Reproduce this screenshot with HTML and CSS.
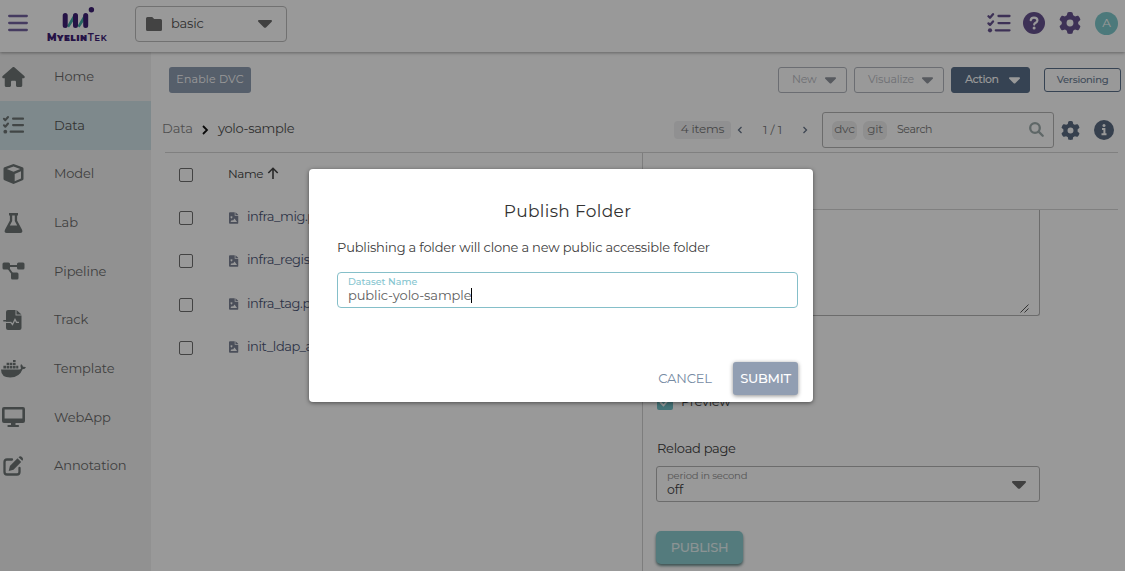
FILE: index.html
```html
<!DOCTYPE html>
<html lang="en">
<head>
<meta charset="utf-8">
<title>MyelinTek</title>
<link rel="stylesheet" href="styles.css">
</head>
<body>
<svg class="defs" width="0" height="0">
  <symbol id="gear" viewBox="0 0 512 512"><path d="M495.9 166.6c3.2 8.7 .5 18.4-6.4 24.6l-43.3 39.4c1.1 8.3 1.7 16.8 1.7 25.4s-.6 17.1-1.7 25.4l43.3 39.4c6.9 6.2 9.6 15.9 6.4 24.6c-4.4 11.9-9.7 23.3-15.8 34.3l-4.7 8.1c-6.6 11-14 21.4-22.1 31.2c-5.9 7.2-15.7 9.6-24.5 6.8l-55.7-17.7c-13.4 10.3-28.2 18.9-44 25.4l-12.5 57.1c-2 9.1-9 16.3-18.2 17.8c-13.8 2.3-28 3.5-42.5 3.5s-28.7-1.2-42.5-3.5c-9.2-1.5-16.2-8.7-18.2-17.8l-12.5-57.1c-15.8-6.5-30.6-15.1-44-25.4L83.1 425.9c-8.8 2.8-18.6 .3-24.5-6.8c-8.1-9.8-15.5-20.2-22.1-31.2l-4.7-8.1c-6.1-11-11.4-22.4-15.8-34.3c-3.2-8.7-.5-18.4 6.4-24.6l43.3-39.4C64.6 273.1 64 264.6 64 256s.6-17.1 1.7-25.4L22.4 191.2c-6.9-6.2-9.6-15.9-6.4-24.6c4.4-11.9 9.7-23.3 15.8-34.3l4.7-8.1c6.600-11 14-21.4 22.1-31.2c5.9-7.2 15.7-9.6 24.5-6.8l55.7 17.7c13.4-10.3 28.2-18.9 44-25.4l12.5-57.1c2-9.1 9-16.3 18.2-17.8C227.3 1.2 241.5 0 256 0s28.7 1.2 42.5 3.5c9.2 1.5 16.2 8.7 18.2 17.8l12.5 57.1c15.8 6.5 30.6 15.1 44 25.4l55.7-17.7c8.8-2.8 18.6-.3 24.5 6.8c8.1 9.8 15.5 20.2 22.1 31.2l4.7 8.1c6.1 11 11.4 22.4 15.8 34.3zM256 336a80 80 0 1 0 0-160 80 80 0 1 0 0 160z"/></symbol>
  <symbol id="tasks" viewBox="0 0 24 22"><g fill="none" stroke="currentColor" stroke-width="2.3" stroke-linecap="round" stroke-linejoin="round"><path d="M1.500 4.200l1.500 1.500L6 2.200M1.500 11.400l1.500 1.500 3-3.500M11.500 4h11M11.500 11.100h11M8.800 18.300h13.700"/></g><circle cx="3" cy="18.300" r="2.100"/></symbol>
  <symbol id="caret" viewBox="0 0 14 8"><path d="M1 0h12c1 0 1.300 1 .7 1.700L8 7.400c-.6.6-1.400.6-2 0L.3 1.700C-.3 1 0 0 1 0z"/></symbol>
  <symbol id="image" viewBox="0 0 10 12"><path fill-rule="evenodd" d="M1 0h5v3.500h4V11a1 1 0 0 1-1 1H1a1 1 0 0 1-1-1V1a1 1 0 0 1 1-1zM6.800 0L10 2.800H6.800zM2.600 4.200a1 1 0 1 0 .01 0zM1.500 10.300h7L5.800 6.500l-1.700 2.300-.9-1z"/></symbol>
</svg>

<div class="app">
  <header class="topbar">
    <svg class="burger" viewBox="0 0 20 18"><path d="M1.200 2h17.600M1.200 9h17.600M1.200 16h17.600"/></svg>
    <div class="logo">
      <svg class="mark" viewBox="0 0 34 24"><path class="teal" d="M5 20l7-12v6L7 21.500zM15.500 20l7-12v6l-5 7.500z"/><path class="bars" d="M3.200 9.500v10M13.500 9.500v10M23.700 9.500v10"/><circle cx="29.400" cy="3.700" r="2.700"/></svg>
      <div class="brand"><b>Myelin</b>Tek</div>
    </div>
    <div class="project">
      <svg class="folder" viewBox="0 0 16 14"><path d="M1.500 0h4.700l2 2H14.500A1.500 1.500 0 0 1 16 3.500v9A1.500 1.500 0 0 1 14.500 14h-13A1.500 1.500 0 0 1 0 12.500v-11A1.500 1.500 0 0 1 1.500 0z"/></svg>
      <span class="project-name">basic</span>
      <svg class="caret-lg"><use href="#caret"/></svg>
    </div>
    <div class="top-actions">
      <svg class="t-tasks"><use href="#tasks"/></svg>
      <svg class="t-help" viewBox="0 0 22 22"><circle cx="11" cy="11" r="11"/><path d="M7.700 8.200C8 6.500 9.300 5.700 11 5.700c2 0 3.400 1.100 3.400 2.700 0 2.300-3.200 2.300-3.200 4.200" fill="none" stroke="#fff" stroke-width="2.200" stroke-linecap="round"/><circle cx="11.100" cy="15.900" r="1.500" fill="#fff"/></svg>
      <svg class="t-gear"><use href="#gear"/></svg>
      <span class="avatar">A</span>
    </div>
  </header>

  <div class="body">
    <nav class="sidebar">
      <a class="item"><svg class="ico" viewBox="0 0 576 512"><path d="M575.800 255.500c0 18-15 32.100-32 32.100h-32l.7 160.200c0 2.700-.2 5.400-.5 8.100V472c0 22.100-17.900 40-40 40H392c-22.100 0-40-17.900-40-40V384c0-17.700-14.300-32-32-32H256c-17.700 0-32 14.300-32 32v88c0 22.100-17.900 40-40 40H104c-22.100 0-40-17.900-40-40V287.600H32c-18 0-32-14-32-32.100c0-9 3-17 10-24L266.400 8c7-7 15-8 22-8s15 2 21 7L564.800 231.500c8 7 12 15 11 24z"/></svg><span>Home</span></a>
      <a class="item active"><svg class="ico"><use href="#tasks"/></svg><span>Data</span></a>
      <a class="item"><svg class="ico" viewBox="0 0 22 20"><path fill-rule="evenodd" d="M11 0l9 3.200q1 .4 1 1.500v10q0 1-1 1.500L11 20l-9-3.800q-1-.5-1-1.500v-10q0-1.100 1-1.500zM11 2.500L4.300 5l6.700 2.700L17.700 5zM12.200 10v7.200l6.300-2.700V7.300z"/></svg><span>Model</span></a>
      <a class="item"><svg class="ico" viewBox="0 0 22 20"><path fill-rule="evenodd" d="M6.500 0h9v2.400h-.9v5.100l4.800 9q1.500 3.300-1.700 3.500H4.300Q1 19.800 2.600 16.500l4.800-9V2.400h-.9zM9.700 2.400v5.700L7.300 12.500h7.400l-2.400-4.400V2.400z"/></svg><span>Lab</span></a>
      <a class="item"><svg class="ico" viewBox="0 0 22 20"><rect x="0" y="1.500" width="7.500" height="7" rx="1.500"/><rect x="14.500" y="1.500" width="7.500" height="7" rx="1.500"/><rect x="8.500" y="11.500" width="7.500" height="7" rx="1.500"/><path d="M7 5h8M6 7.500l4 5.500" fill="none" stroke="currentColor" stroke-width="2"/></svg><span>Pipeline</span></a>
      <a class="item"><svg class="ico" viewBox="0 0 22 20"><path d="M5.500 0h7.500v5.500h6V18a2 2 0 0 1-2 2H5.500a2 2 0 0 1-2-2V2a2 2 0 0 1 2-2zM14 0l5 4.500h-5z"/><path class="cut" d="M3 12.300h5.300l1.700 2.200 2.500-5 1.500 2.800h2.500"/><path d="M.8 10h7v1.600h-7z"/></svg><span>Track</span></a>
      <a class="item"><svg class="ico docker" viewBox="0 0 25 18"><path d="M0 9.500h18.300q1.200-.2 1.700-1Q18.700 6.300 20 4q1.700 1 2 2.800 1.800-.3 3 .5-.8 2-3.500 2-3 8.200-12.300 8.200Q0 17.500 0 9.500z"/><path d="M2.400 5.700h2.600v2.800H2.400zM5.600 5.700h2.600v2.800H5.600zM8.800 5.700h2.600v2.800H8.800zM12 5.700h2.600v2.800H12zM15.200 5.700h2.100v2.800h-2.100zM5.600 2.700h2.600v2.400H5.600zM8.800 2.700h2.600v2.400H8.800zM12 2.700h2.600v2.400H12zM12 0h2.600v2.100H12z"/></svg><span>Template</span></a>
      <a class="item"><svg class="ico" viewBox="0 0 23 20"><path fill-rule="evenodd" d="M2 0h19a2 2 0 0 1 2 2v12a2 2 0 0 1-2 2H13.500v2H16q1.200 0 1.200 1T16 20H6.500q-1.200 0-1.200-1t1.200-1H9v-2H2a2 2 0 0 1-2-2V2a2 2 0 0 1 2-2zM2.600 2.600v8.800h17.800V2.600z"/></svg><span>WebApp</span></a>
      <a class="item"><svg class="ico" viewBox="0 0 22 20"><path d="M9.500 3.500H4.500Q2 3.500 2 6v10q0 2.500 2.500 2.500h10Q17 18.500 17 16v-4" fill="none" stroke="currentColor" stroke-width="2.300" stroke-linecap="round"/><path d="M15 2.300l3.700 3.700-7.700 7.700-4.800 1.300 1.200-5zM16 1.300q1.600-1.800 3.400-.4 2 1.900.4 3.900z"/></svg><span>Annotation</span></a>
    </nav>

    <main class="content">
      <div class="toolbar">
        <button class="btn dvc">Enable DVC</button>
        <div class="tools">
          <button class="btn ghost new"><span>New</span><svg class="caret-sm"><use href="#caret"/></svg></button>
          <button class="btn ghost visualize"><span>Visualize</span><svg class="caret-sm"><use href="#caret"/></svg></button>
          <button class="btn action"><span>Action</span><svg class="caret-sm"><use href="#caret"/></svg></button>
          <button class="btn versioning">Versioning</button>
        </div>
      </div>

      <div class="crumbs">
        <span class="crumb-root">Data</span>
        <svg class="sep" viewBox="0 0 8 10"><path d="M2 1l4 4-4 4"/></svg>
        <span class="crumb-leaf">yolo-sample</span>
        <div class="pager">
          <span class="count">4 items</span>
          <svg class="chev" viewBox="0 0 6 8"><path d="M4.500 1L1.500 4l3 3"/></svg>
          <span class="page">1 / 1</span>
          <svg class="chev" viewBox="0 0 6 8"><path d="M1.500 1l3 3-3 3"/></svg>
        </div>
        <div class="search">
          <span class="tag">dvc</span><span class="tag git">git</span><span class="hint">Search</span>
          <svg class="glass" viewBox="0 0 15 15"><circle cx="6" cy="6" r="4.800"/><path d="M9.600 9.600L13.700 13.700"/></svg>
        </div>
        <svg class="c-gear"><use href="#gear"/></svg>
        <svg class="c-info" viewBox="0 0 20 20"><circle cx="10" cy="10" r="10"/><circle cx="10" cy="5.600" r="1.500" fill="#fff"/><path d="M8 9h2.400v5M7.500 14.300h5" fill="none" stroke="#fff" stroke-width="2"/></svg>
      </div>

      <div class="panes">
        <section class="files">
          <div class="row head"><i class="box"></i><span class="col">Name</span><svg class="up" viewBox="0 0 12 12"><path d="M6 12V1.500M1.300 6L6 1.300 10.700 6"/></svg></div>
          <div class="row"><i class="box"></i><svg class="file"><use href="#image"/></svg><span>infra_mig.png</span></div>
          <div class="row"><i class="box"></i><svg class="file"><use href="#image"/></svg><span>infra_registry.png</span></div>
          <div class="row"><i class="box"></i><svg class="file"><use href="#image"/></svg><span>infra_tag.png</span></div>
          <div class="row"><i class="box"></i><svg class="file"><use href="#image"/></svg><span>init_ldap_auth.png</span></div>
        </section>
        <section class="detail">
          <div class="detail-head"></div>
          <div class="form">
            <div class="textarea"><svg class="grip" viewBox="0 0 9 9"><path d="M.5 8.500l8-8M4.500 8.500l4-4"/></svg></div>
            <div class="preview"><span class="checked"><svg viewBox="0 0 12 10"><path d="M1 5l3.500 3.500L11 1"/></svg></span><span>Preview</span></div>
            <div class="label">Reload page</div>
            <div class="select">
              <div><div class="select-label">period in second</div><div class="select-value">off</div></div>
              <svg class="caret-lg"><use href="#caret"/></svg>
            </div>
            <button class="publish">PUBLISH</button>
          </div>
        </section>
      </div>
    </main>
  </div>
</div>

<div class="overlay">
  <div class="dialog">
    <h1>Publish Folder</h1>
    <p>Publishing a folder will clone a new public accessible folder</p>
    <div class="field">
      <div class="field-label">Dataset Name</div>
      <div class="field-value"><span>public-yolo-sample</span><i class="cursor"></i></div>
    </div>
    <div class="buttons">
      <button class="cancel">CANCEL</button>
      <button class="submit">SUBMIT</button>
    </div>
  </div>
</div>
</body>
</html>
```

FILE: styles.css
```css
* { box-sizing: border-box; }
body {
  margin: 0;
  width: 1125px;
  height: 571px;
  overflow: hidden;
  font-family: Montserrat, Inter, sans-serif;
  font-size: 13px;
  line-height: 16px;
  color: #404040;
  background: #fff;
}
button { font: inherit; border: 0; padding: 0 0 2px; background: none; white-space: nowrap; }
svg { display: block; flex: none; fill: currentColor; }
.defs { position: absolute; }
.app { height: 571px; display: flex; flex-direction: column; }

.topbar {
  flex: none;
  height: 52px;
  display: flex;
  align-items: flex-start;
  background: #fff;
  box-shadow: 0 1px 3px rgba(0, 0, 0, .35);
  z-index: 1;
}
.burger { width: 20px; height: 18px; margin: 14px 0 0 8px; fill: none; stroke: #7463a0; stroke-width: 2.3; stroke-linecap: round; }
.logo { width: 62px; margin: 6px 0 0 18px; color: #3f2176; }
.mark { width: 34px; height: 24px; margin-left: 16px; }
.mark .teal { fill: #41aaa4; }
.mark .bars { stroke: currentColor; stroke-width: 5; stroke-linecap: round; }
.brand { font-size: 10px; line-height: 16px; font-variant: small-caps; font-weight: 600; letter-spacing: .5px; white-space: nowrap; margin-left: 1px; }
.brand b { font-weight: 900; }
.project {
  width: 152px;
  height: 36px;
  margin: 6px 0 0 27px;
  padding: 0 14px 0 10px;
  display: flex;
  align-items: center;
  border: 1px solid #bdbdbd;
  border-radius: 4px;
}
.folder { width: 16px; height: 14px; color: #707070; }
.project-name { margin: 0 0 2px 9px; flex: 1; letter-spacing: -.2px; color: #505050; }
.caret-lg { width: 14px; height: 8px; color: #6b6b6b; }
.top-actions { margin-left: auto; display: flex; align-items: center; height: 46px; color: #67528f; padding-right: 7px; }
.t-tasks { width: 24px; height: 22px; margin-right: 12px; }
.t-help { width: 22px; height: 22px; margin-right: 14px; }
.t-gear { width: 22px; height: 22px; margin-right: 14px; }
.avatar { width: 23px; height: 23px; border-radius: 50%; background: #7fcacd; color: #fff; font-size: 12px; line-height: 21px; text-align: center; }

.body { flex: 1; display: flex; min-height: 0; }
.sidebar { width: 151px; flex: none; background: #f2f2f2; }
.item { height: 48.65px; padding-left: 2px; display: flex; align-items: center; color: #6a6a6a; letter-spacing: -.1px; }
.item span { margin-bottom: 1px; }
.item:first-child { height: 49px; }
.item.active { background: #d3e5ea; color: #555; }
.ico { width: 23px; height: 20px; margin-right: 29px; color: #6e7676; }
.docker { width: 25px; height: 18px; margin-left: -1px; margin-right: 28px; }
.cut { fill: none; stroke: #f2f2f2; stroke-width: 1.300; }

.content { flex: 1; min-width: 0; padding: 15px 7px 0 11px; display: flex; flex-direction: column; }
.toolbar { display: flex; justify-content: space-between; height: 26px; padding-left: 7px; margin-right: -3px; }
.btn { height: 26px; border-radius: 3px; font-size: 11px; }
.dvc { width: 82px; background: #8f9eb2; color: #fff; letter-spacing: .2px; }
.tools { display: flex; align-items: flex-start; }
.tools .btn { display: flex; align-items: center; justify-content: space-between; padding: 0 10px 0 13px; border: 1px solid #b3b6bf; color: #b9bbc3; }
.tools .btn span { margin-bottom: 2px; letter-spacing: -.2px; }
.caret-sm { width: 11px; height: 7px; color: #91969f; margin-top: 1px; }
.tools .new { width: 69px; margin-right: 7px; }
.tools .visualize { width: 90px; margin-right: 7px; }
.tools .action { width: 79px; margin-right: 14px; padding-right: 9px; background: #5b708a; border-color: #5b708a; color: #fff; font-weight: 500; }
.tools .action span { letter-spacing: -.5px; }
.action .caret-sm { color: #fff; }
.tools .versioning { width: 77px; height: 24px; margin-top: 1px; padding: 0; justify-content: center; border-color: #5b708a; color: #6b7e95; font-size: 10px; font-weight: 500; letter-spacing: -.25px; }

.crumbs { height: 36px; margin: 19px -4px 0 0; display: flex; align-items: center; flex: none; }
.crumb-root { color: #858585; letter-spacing: -.05px; margin-bottom: 4px; }
.sep { width: 8px; height: 10px; margin: 0 9px 1px 8px; fill: none; stroke: #111; stroke-width: 1.8; }
.crumb-leaf { color: #505050; letter-spacing: -.3px; margin-bottom: 4px; }
.pager { margin-left: auto; display: flex; align-items: center; color: #757575; }
.count { width: 57px; height: 18px; line-height: 16px; text-align: center; border-radius: 4px; background: #f0f0f2; font-size: 12px; letter-spacing: -.2px; }
.chev { width: 6px; height: 8px; margin-left: 6px; fill: none; stroke: #667489; stroke-width: 1.300; }
.page { width: 57px; text-align: center; font-size: 12px; margin: 0 -5px 1px 1px; }
.search { width: 232px; height: 36px; margin: 0 7px 0 14px; padding: 0 9px; display: flex; align-items: center; border: 1px solid #b5b5b5; border-radius: 3px; }
.tag { width: 25px; height: 19px; line-height: 16px; border-radius: 6px; text-align: center; background: #eee; color: #808080; font-size: 12px; letter-spacing: -.2px; }
.tag.git { width: 24px; margin-left: 6px; }
.hint { margin: 0 0 2px 10px; font-size: 11px; color: #757575; flex: 1; letter-spacing: -.4px; }
.glass { width: 15px; height: 15px; margin-bottom: 1px; fill: none; stroke: #9eacac; stroke-width: 2.300; stroke-linecap: round; }
.c-gear { width: 19px; height: 19px; color: #5b6b82; margin-right: 14px; }
.c-info { width: 20px; height: 20px; color: #5b6b82; margin-right: 8px; }

.panes { flex: 1; display: flex; margin: 4px 0 0 3px; border-top: 1px solid #d5d5d5; }
.files { width: 477px; flex: none; padding-left: 14px; }
.row { height: 43.200px; display: flex; align-items: center; color: #4b5575; }
.row span { white-space: nowrap; font-size: 13px; letter-spacing: -.42px; margin-bottom: 3px; }
.row .col { font-size: 12px; letter-spacing: -.4px; color: #444; margin-bottom: 2px; }
.box { width: 14px; height: 14px; border: 1px solid #707070; border-radius: 2px; margin-right: 36px; margin-top: 1px; }
.head .box { margin-right: 35px; }
.up { width: 12px; height: 12px; margin: -3px 0 0 4px; fill: none; stroke: #444; stroke-width: 1.600; }
.file { width: 9.500px; height: 12px; margin-right: 8.500px; color: #7d8496; }
.detail { flex: 1; border-left: 1px solid #d0d0d0; }
.detail-head { height: 57px; border-bottom: 1px solid #d5d5d5; }
.form { padding-left: 13px; }
.textarea { width: 384px; height: 106px; border: 1px solid #b5b5b5; border-top: 0; border-radius: 0 0 3px 3px; display: flex; justify-content: flex-end; align-items: flex-end; padding: 0 10px 2px 0; }
.grip { width: 9px; height: 9px; fill: none; stroke: #444; stroke-width: .9; }
.preview { display: flex; align-items: center; gap: 8px; height: 16px; margin-top: 78px; padding-left: 1px; letter-spacing: -.3px; }
.preview > span:last-child { margin-bottom: 2px; }
.checked { width: 16px; height: 16px; border-radius: 2px; background: #74c0c7; display: flex; align-items: center; justify-content: center; }
.checked svg { width: 12px; height: 10px; fill: none; stroke: #fff; stroke-width: 1.800; }
.label { margin: 30px 0 0 1px; letter-spacing: -.3px; }
.select { width: 384px; height: 36px; margin-top: 10px; padding: 0 13px 0 10px; border: 1px solid #b5b5b5; border-radius: 3px; display: flex; align-items: center; justify-content: space-between; }
.select .caret-lg { margin-top: 2px; }
.select-label { font-size: 10px; line-height: 12px; letter-spacing: -.2px; color: #909090; }
.select-value { font-size: 12.500px; line-height: 15px; margin: 0 0 1px; letter-spacing: -.1px; }
.publish { display: block; width: 87px; height: 33px; margin-top: 29px; border-radius: 5px; background: #8dcdd0; color: #e8f6f7; font-weight: 500; letter-spacing: -.3px; box-shadow: 0 2px 3px rgba(0, 60, 60, .6); }

.overlay { position: absolute; inset: 0; z-index: 2; background: rgba(0, 0, 0, .4); padding: 169px 0 0 309px; }
.dialog { width: 504px; height: 233px; padding: 32px 15px 0 28px; background: #fff; border-radius: 4px; box-shadow: 0 1px 4px rgba(0, 0, 0, .5); }
h1 { margin: 0; font-size: 17px; line-height: 20px; font-weight: 400; text-align: center; letter-spacing: .35px; color: #333; }
p { margin: 18px 0 0; line-height: 16px; letter-spacing: -.185px; color: #404040; white-space: nowrap; }
.field { width: 461px; height: 36px; margin-top: 17px; padding: 3px 10px; border: 1px solid #85bfc9; border-radius: 4px; }
.field-label { font-size: 9.500px; line-height: 12px; color: #85c5cf; font-weight: 500; }
.field-value { display: flex; align-items: center; line-height: 15px; letter-spacing: -.1px; color: #606060; }
.cursor { width: 1px; height: 15px; background: #000; }
.buttons { display: flex; justify-content: flex-end; margin-top: 54px; }
.cancel { width: 60px; height: 33px; color: #768ba3; margin-right: 18px; letter-spacing: -.15px; }
.submit { width: 65px; height: 33px; border-radius: 3px; background: #919eb2; color: #fff; font-weight: 500; letter-spacing: -.3px; box-shadow: 0 1px 4px rgba(0, 0, 0, .45); }
```
